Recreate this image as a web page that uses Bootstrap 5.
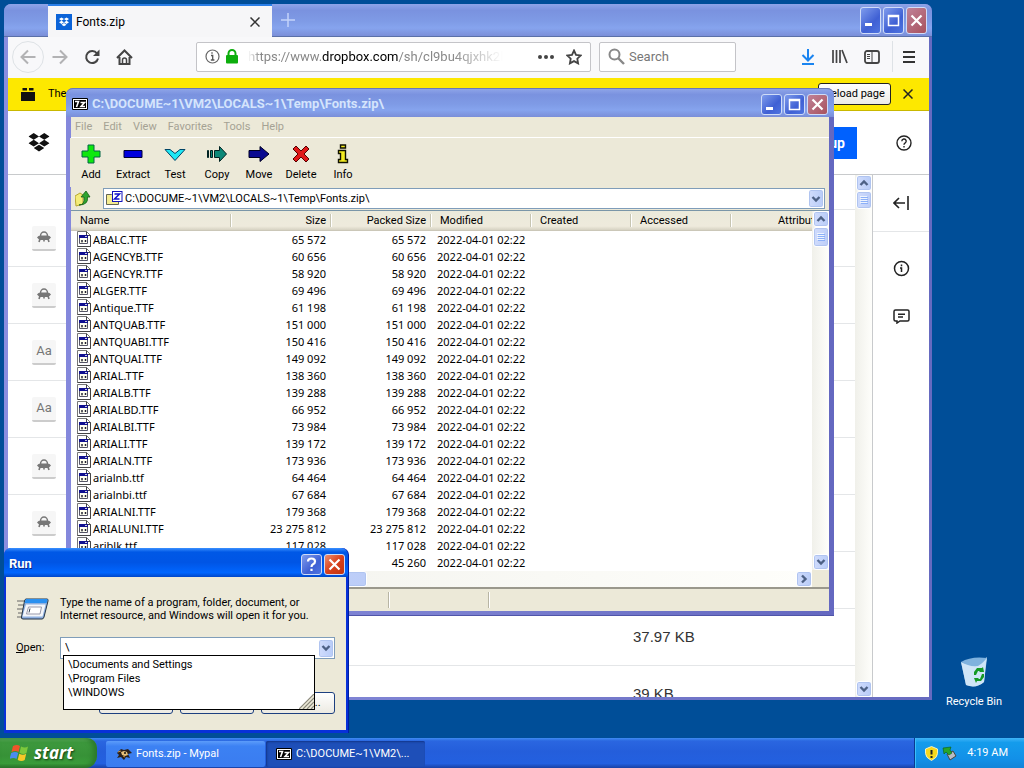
<!DOCTYPE html>
<html lang="en">
<head>
<meta charset="utf-8">
<meta name="viewport" content="width=device-width, initial-scale=1">
<title>Desktop</title>
<link rel="stylesheet" href="https://cdn.jsdelivr.net/npm/bootstrap@5.3.0/dist/css/bootstrap.min.css">
<style>
:root{--face:#ece9d8;--frame:#7b80d0;--deep:#5055a8}
html,body{height:100%}
body{font-family:Roboto,"Noto Sans",sans-serif;font-size:11px;line-height:14px;color:#000;background:#004e98;overflow:hidden}
button,input{font:inherit;color:inherit}
button{border:0;background:none;padding:0;display:inline-flex;align-items:center;justify-content:center}
svg{display:block;flex:none}
.desk{min-height:0}
.win{position:absolute;display:flex;flex-direction:column}
.lunatitle{background:linear-gradient(#8ea4e8,#7a92df 20%,#7f9be6 55%,#86a4ee 75%,#7a8ed8)}
.ctls{display:flex;align-items:center;gap:2px}
.ctl{width:21px;height:21px;border:1px solid #cfdcf8;border-radius:3px;background:linear-gradient(135deg,#7f9cec,#3f60d4 60%,#4f74e0);flex:none}
.ctl.tall{height:27px}
.ctl.x-soft{background:linear-gradient(135deg,#c08298,#a8525e)}
.ctl.x-hot{background:linear-gradient(135deg,#ee9070,#d8401c 50%,#c03410)}
.arrowbtn{width:16px;height:16px;border:1px solid #fff;border-radius:3px;background:linear-gradient(90deg,#d0dcfc,#b8ccf8);box-shadow:inset 0 0 0 1px #b0c4f0;flex:none}
.combo .arrowbtn{height:19px}
.thumb{border:1px solid #fff;border-radius:3px;background:linear-gradient(90deg,#d0dcfc,#bccdf8);box-shadow:inset 0 0 0 1px #b0c4f0;display:flex;align-items:center;justify-content:center;flex:none}
.vtrack{width:17px;background:linear-gradient(90deg,#f0f0ea,#fefefb);display:flex;flex-direction:column;align-items:center;flex:none}

/* browser */
.browser{left:4px;right:92px;top:4px;bottom:38px;padding:0 3px 3px 4px;background:linear-gradient(90deg,#8a8ee0,var(--frame) 50%,#666ac0);border-radius:7px 7px 0 0}
.tabstrip,.navrow,.notice,.pagehead,.ziptitle,.menurow,.toolrow,.addrrow,.statusrow,.runtitle{flex:none}
.tabstrip{height:33px;border-bottom:1px solid #5a70a8;margin:0 -3px 0 -4px;padding:0 5px 0 4px;border-radius:7px 7px 0 0}
.tabitem{width:224px;height:33px;background:#f6f6f8;border-top:2px solid #2a7fe8;margin-left:40px;font-size:12px}
.navrow{height:41px;background:#f8f8fa;padding-bottom:2px}
.tool{width:32px;height:32px;flex:none}
.field{height:30px;background:#fff;border:1px solid #c4c4c8;border-radius:2px;font-size:13px;color:#777}
.urltext{color:#888;white-space:nowrap;-webkit-mask-image:linear-gradient(90deg,transparent,#000 12px,#000 80%,transparent)}
.searchbox{width:137px}
.notice{height:33px;background:#fde800;border-bottom:1px solid #c9b800}
.reload{border:1px solid #222;border-radius:3px;background:linear-gradient(#fff,#ecebe4);height:22px;width:73px}
.pagehead{height:64px;border-bottom:1px solid #c8cacc;background:#fff}
.brandmark{margin-left:20px}
.signup{background:#0061fe;color:#fff;font-weight:700;font-size:14px;width:80px;height:32px;justify-content:flex-end;padding-right:12px}
.helpbtn{width:46px;margin:0 2px 0 24px}
.filerow{height:57px;border-bottom:1px solid #e4e6e8;flex:none}
.filerow.short{height:35px}
.filethumb{width:24px;height:25px;margin-left:24px;background:#f6f6f6;border-bottom:2px solid #ccc;border-radius:2px;color:#777;font-size:13px}
.filesize{font:15px/20px "Liberation Sans",sans-serif;color:#333;width:222px}
.siderail{width:57px;border-left:1px solid #c8cacc;background:#fff}
.siderail .tool{margin-top:20px}
.siderail .tool+.tool{margin-top:16px}

/* archive manager */
.zipwin{left:66px;right:190px;top:88px;bottom:122px;padding:0 5px 4px;background:linear-gradient(90deg,#8488dc,var(--frame) 50%,#6468c0);border-radius:7px 7px 0 0;border-bottom:1px solid var(--deep)}
.ziptitle{height:29px;margin:0 -5px;padding:2px 6px 0 6px;border-top:1px solid #6878b8;border-radius:7px 7px 0 0}
.wtitle{font:bold 13px/18px Roboto,"Open Sans",sans-serif}
.ziptitle .wtitle{color:#d4e4fc}
.menurow{height:21px;background:var(--face);border-bottom:1px solid #fff;color:#a5a294;gap:11px}
.toolrow{height:49px;background:var(--face)}
.toolrow button{flex-direction:column;height:49px;padding-top:1px;width:42px;gap:4px;flex:none}
.toolrow{margin-left:-1px}
.addrrow{height:24px;background:var(--face);border-bottom:1px solid #7a96a8}
.combo{border:1px solid #7f9db9;background:#fff}
.combo input{border:0;outline:0;background:none;min-width:0}
.zipicon{margin:0 2px}
.listtable{table-layout:fixed;border-collapse:collapse;width:760px}
.listtable th{height:19px;font-weight:400;line-height:16px;background:linear-gradient(#ebeadb,#eeeadc 80%,#d6d2c2);border-bottom:1px solid #cbc7b8;position:relative;padding:2px 5px 0 9px;white-space:nowrap}
.listtable th+th::before{content:"";position:absolute;left:-1px;top:3px;height:13px;border-left:1px solid #c7c5b2;border-right:1px solid #fff}
.listtable td{height:17px;line-height:17px;padding:0 5px 0 6px;white-space:nowrap;font-family:"Noto Sans",sans-serif}
.listtable .num{text-align:right}
.fname{display:flex;gap:2px;align-items:center}
.corner{height:17px;background:var(--face)}
.statusrow{height:24px;background:var(--face);border-top:2px solid #9a988c}
.statusrow span{border-right:1px solid #b8b5a4;box-shadow:1px 0 #fff;margin:3px 0}

/* run dialog */
.rundlg{left:4px;bottom:5px;width:345px;height:185px;padding:0 2px 3px;background:#0831d9;border-radius:7px 7px 0 0;border-right:1px solid #001ea0}
.runtitle{height:29px;margin:0 -2px;padding:3px 3px 0 5px;color:#fff;text-shadow:1px 1px #0a2a90;border-radius:7px 7px 0 0;background:linear-gradient(#3a90ff,#0058e6 14%,#0055e5 50%,#0066ff 85%,#0046c8)}
.runbody{background:var(--face)}
.runmsg{padding:19px 10px 0 11px;gap:11px}
.runmsg p{line-height:13px}
.runopen{padding:0 11px 0 10px;margin-top:15px}
.runopen label{width:44px}
.runopen .combo{height:22px}
.runbtns{padding:0 11px 16px;gap:7px;margin-top:auto}
.suggest{position:absolute;left:59px;top:107px;width:252px;height:55px;background:#fff;border:1px solid #000;padding:2px 4px;z-index:2}
.suggest li{height:14px}
.grip{position:absolute;right:0;bottom:0}
.xpbtn{width:74px;height:22px;border:1px solid #1d4080;border-radius:3px;background:linear-gradient(#fff,#eceae2)}

.bin{position:absolute;right:12px;bottom:29px;width:76px;color:#fff;text-decoration:none;text-align:center;gap:7px}

/* taskbar */
.taskbar{height:30px;background:linear-gradient(#3f8cf3,#2a66e0 10%,#245edb 45%,#2360e0 85%,#1941a5);color:#fff;flex:none}
.startbtn{width:97px;height:30px;border-radius:0 10px 12px 0;background:linear-gradient(#5cac5c,#3d983d 15%,#379237 60%,#3a9c3a 85%,#2a702a);box-shadow:inset -4px 0 5px #2c7a2c;font:italic bold 17px/22px "Open Sans",sans-serif;text-shadow:1px 1px 2px #123c12;padding-right:14px}
.tasks{gap:1px;margin-left:9px;padding-top:2px}
.task{height:26px;width:159px;border-radius:2px;background:linear-gradient(#5c9cfa,#3c81f3 20%,#3a7cf0);justify-content:flex-start;padding-left:10px}
.task.active-task{background:#1e4fb8;box-shadow:inset 1px 1px 2px #12358a}
.tray{width:110px;background:linear-gradient(#40b4f8,#149cec 15%,#1290e8 70%,#1284d8);border-left:1px solid #0a3a90;box-shadow:inset 1px 0 #3cc0fa;padding-left:10px}
</style>
</head>
<body class="d-flex flex-column">
<svg width="0" height="0" class="position-absolute" aria-hidden="true">
<defs>
<symbol id="fon" viewBox="0 0 14 16"><path d="M.5.5h9l4 4v11H.5z" fill="#fff" stroke="#777"/><path d="M9.500.5v4h4v11H.5" fill="none" stroke="#444"/><path d="M2.500 5.500h8v7h-8z" fill="#fffff0" stroke="#556"/><path d="M2 4h9v3H2z" fill="#101090"/><path d="M8 5.500h2" stroke="#ccd"/><path d="M4 10h2M5 9v2.500M7.500 10h2M8.500 9v2" stroke="#223"/></symbol>
<symbol id="cdn" viewBox="0 0 10 10"><path d="M1.500 3 5 6.500 8.500 3" fill="none" stroke="#4d6185" stroke-width="2.400"/></symbol>
<symbol id="cup" viewBox="0 0 10 10"><path d="M1.500 7 5 3.500 8.500 7" fill="none" stroke="#4d6185" stroke-width="2.400"/></symbol>
<symbol id="crt" viewBox="0 0 10 10"><path d="M3 1.500 6.500 5 3 8.500" fill="none" stroke="#4d6185" stroke-width="2.400"/></symbol>
<symbol id="mn" viewBox="0 0 13 13"><path d="M1 10.500h7" stroke="#fff" stroke-width="3"/></symbol>
<symbol id="mx" viewBox="0 0 13 13"><path d="M1.500 1.500h10v10h-10zM1 2.500h11" fill="none" stroke="#fff" stroke-width="1.500"/></symbol>
<symbol id="xx" viewBox="0 0 13 13"><path d="m1.500 1.500 10 10m0-10-10 10" stroke="#fff" stroke-width="2.200"/></symbol>
<symbol id="grp" viewBox="0 0 8 8"><path d="M0 .5h7M0 2.500h7M0 4.500h7M0 6.500h7" stroke="#eef4fe"/><path d="M1 1.500h7M1 3.500h7M1 5.500h7M1 7.500h7" stroke="#8cb0f8"/></symbol>
<symbol id="dbx" viewBox="0 0 20 18"><path d="M5 0 10 3.200 5 6.400 0 3.200zM15 0l5 3.200-5 3.200-5-3.200zM0 9.600 5 6.400l5 3.200-5 3.200zM15 6.400l5 3.200-5 3.200-5-3.200zM5 14.300l5-3.200 5 3.200-5 3.200z" fill="currentColor"/></symbol>
<symbol id="ufo" viewBox="0 0 14 12"><path d="M3.500 5a3.500 4 0 0 1 7 0" fill="none" stroke="#777" stroke-width="1.500"/><path d="M0 6.500Q1 4.500 4 4.500h6q3 0 4 2L11.500 9h-9z" fill="#777"/><path d="M3 8 2 11M7 8v2.500M11 8l1 3" stroke="#777" stroke-width="1.600"/></symbol>
<symbol id="sz" viewBox="0 0 16 12"><path d="M.5.5h15v11H.5z" fill="#fff" stroke="#000"/><path d="M2 2h12v8H2z" fill="#000"/><path d="M3 3.500h3.500L4.500 9M8.500 4.500h4l-3.500 4h4" fill="none" stroke="#fff" stroke-width="1.600"/></symbol>
</defs>
</svg>

<main class="desk position-relative flex-grow-1">

<section class="win browser" aria-label="Web browser">
  <div class="tabstrip lunatitle d-flex">
    <div class="tabitem d-flex align-items-center ps-2 pe-2">
      <svg width="16" height="16" viewBox="0 0 16 16" class="me-1" color="#fff"><rect width="16" height="16" fill="#0b63d8"/><use href="#dbx" x="3" y="3" width="10" height="10"/></svg>
      <span class="flex-grow-1">Fonts.zip</span>
      <button aria-label="Close tab" class="me-1"><svg width="10" height="10" viewBox="0 0 10 10"><path d="m.5.5 9 9m0-9-9 9" stroke="#333" stroke-width="1.500"/></svg></button>
    </div>
    <button aria-label="New tab" class="ms-2"><svg width="16" height="16" viewBox="0 0 16 16"><path d="M8 1v14M1 8h14" stroke="#c4d4fa" stroke-width="1.500"/></svg></button>
    <div class="ms-auto ctls">
      <button class="ctl tall" aria-label="Minimize"><svg width="13" height="13"><use href="#mn"/></svg></button>
      <button class="ctl tall" aria-label="Maximize"><svg width="13" height="13"><use href="#mx"/></svg></button>
      <button class="ctl tall x-soft" aria-label="Close"><svg width="13" height="13"><use href="#xx"/></svg></button>
    </div>
  </div>
  <nav class="navrow d-flex align-items-center ps-1">
    <button class="tool rounded-circle border" aria-label="Back"><svg width="16" height="16" viewBox="0 0 16 16"><path d="M15.500 8H1.500M8 1.500 1.500 8 8 14.500" fill="none" stroke="#b2b2b4" stroke-width="2"/></svg></button>
    <button class="tool" aria-label="Forward"><svg width="16" height="16" viewBox="0 0 16 16"><path d="M.5 8h14M8 1.500 14.500 8 8 14.500" fill="none" stroke="#b2b2b4" stroke-width="2"/></svg></button>
    <button class="tool" aria-label="Reload"><svg width="16" height="16" viewBox="0 0 16 16"><path d="M13 4.500A6 6 0 1 0 14 9.500" fill="none" stroke="#444" stroke-width="2"/><path d="M15.500.5v6.500H9z" fill="#444"/></svg></button>
    <button class="tool" aria-label="Home"><svg width="17" height="16" viewBox="0 0 17 16"><path d="M1 9 8.500 1.500 16 9M3.500 8v7h10V8" fill="none" stroke="#444" stroke-width="2"/><path d="M6.500 15v-4q0-2 2-2t2 2v4" fill="none" stroke="#444" stroke-width="1.500"/></svg></button>
    <div class="tool"></div><div class="ms-4"></div>
    <div class="field flex-grow-1 d-flex align-items-center ps-2 pe-1">
      <svg width="15" height="15" viewBox="0 0 15 15" class="me-1"><circle cx="7.500" cy="7.500" r="6.500" fill="none" stroke="#666" stroke-width="1.200"/><path d="M6 6.500h1.700V11M5.800 11h3.600M7 3.200v1.600" stroke="#555" stroke-width="1.300" fill="none"/></svg>
      <svg width="16" height="15" viewBox="0 0 16 15" class="me-2"><path d="M4.500 7V4.500a3.500 3.500 0 0 1 7 0V7" fill="none" stroke="#0dae0d" stroke-width="2"/><rect x="2" y="6" width="12" height="8.500" rx="1" fill="#0dae0d"/></svg>
      <div class="urltext" role="textbox" aria-label="Address">https://www.<span class="text-black">dropbox.com</span>/sh/cl9bu4qjxhk2l</div>
      <button class="ms-auto tool" aria-label="Page actions"><svg width="16" height="6" viewBox="0 0 16 6"><g fill="#444"><circle cx="2" cy="3" r="2"/><circle cx="8" cy="3" r="2"/><circle cx="14" cy="3" r="2"/></g></svg></button>
      <button aria-label="Bookmark" class="px-1"><svg width="16" height="16" viewBox="0 0 16 16"><path d="m8 1.500 2 4.300 4.700.6-3.400 3.300.8 4.700L8 12.100l-4.100 2.300.8-4.700L1.300 6.400 6 5.800z" fill="none" stroke="#444" stroke-width="1.800"/></svg></button>
    </div>
    <label class="field d-flex align-items-center ps-2 ms-2 searchbox">
      <svg width="17" height="17" viewBox="0 0 17 17" class="me-1"><circle cx="6.500" cy="6.500" r="5" fill="none" stroke="#888" stroke-width="2"/><path d="m10 10 6 6" stroke="#888" stroke-width="2.400"/></svg>
      <input type="text" aria-label="Search" value="Search" class="border-0 bg-transparent p-0" size="10">
    </label>
    <div class="tool"></div><div class="ms-4"></div>
    <button class="tool" aria-label="Downloads"><svg width="14" height="16" viewBox="0 0 14 16"><path d="M7 0v11M1.500 6 7 11.500 12.500 6M1 15h12" fill="none" stroke="#1a84f0" stroke-width="2"/></svg></button>
    <button class="tool" aria-label="Library"><svg width="16" height="15" viewBox="0 0 16 15"><path d="M1 1v13M4.500 1v13M8 1v13M10 1l5 13" stroke="#444" stroke-width="1.700"/></svg></button>
    <button class="tool" aria-label="Sidebars"><svg width="16" height="14" viewBox="0 0 16 14"><rect x="1" y="1" width="14" height="12" rx="2" fill="none" stroke="#444" stroke-width="1.800"/><path d="M8 1v12M3 4.500h3M3 6.500h3M3 8.500h3" stroke="#444"/></svg></button>
    <div class="border-start ms-1 align-self-stretch my-1"></div>
    <button class="tool me-1" aria-label="Menu"><svg width="12" height="12" viewBox="0 0 12 12"><path d="M0 1h12M0 6h12M0 11h12" stroke="#333" stroke-width="1.800"/></svg></button>
  </nav>
  <div class="notice d-flex align-items-center ps-1">
    <svg width="16" height="15" viewBox="0 0 16 15" class="mx-2"><path d="M1 5h14v9H1zM2.500 1H7v2.500H2.500zM9 1h4.500v2.500H9z" fill="#111"/></svg>
    <span class="ms-1">The</span>
    <button class="reload ms-auto">Reload page</button>
    <button class="px-2 me-2 ms-1" aria-label="Dismiss"><svg width="10" height="10" viewBox="0 0 10 10"><path d="m.5.500 9 9m0-9-9 9" stroke="#222" stroke-width="1.500"/></svg></button>
  </div>
  <header class="pagehead d-flex align-items-center">
    <svg width="22" height="19" viewBox="0 0 20 18" color="#111" class="brandmark"><use href="#dbx"/></svg>
    <button class="signup ms-auto">Sign up</button>
    <button class="helpbtn" aria-label="Help"><svg width="16" height="16" viewBox="0 0 16 16"><circle cx="8" cy="8" r="7" fill="none" stroke="#222" stroke-width="1.400"/><path d="M5.800 6.200a2.200 2.200 0 1 1 3.200 2q-1 .6-1 1.600M8 11v1.500" fill="none" stroke="#222" stroke-width="1.400"/></svg></button>
  </header>
  <div class="d-flex flex-grow-1 overflow-hidden bg-white">
    <div class="flex-grow-1 overflow-hidden d-flex flex-column">
      <div class="filerow short"></div>
      <div class="filerow d-flex align-items-center"><div class="filethumb d-flex align-items-center justify-content-center"><svg width="14" height="12"><use href="#ufo"/></svg></div></div>
      <div class="filerow d-flex align-items-center"><div class="filethumb d-flex align-items-center justify-content-center"><svg width="14" height="12"><use href="#ufo"/></svg></div></div>
      <div class="filerow d-flex align-items-center"><div class="filethumb d-flex align-items-center justify-content-center">Aa</div></div>
      <div class="filerow d-flex align-items-center"><div class="filethumb d-flex align-items-center justify-content-center">Aa</div></div>
      <div class="filerow d-flex align-items-center"><div class="filethumb d-flex align-items-center justify-content-center"><svg width="14" height="12"><use href="#ufo"/></svg></div></div>
      <div class="filerow d-flex align-items-center"><div class="filethumb d-flex align-items-center justify-content-center"><svg width="14" height="12"><use href="#ufo"/></svg></div></div>
      <div class="filerow"></div>
      <div class="filerow d-flex align-items-center"><div class="filesize ms-auto">37.97 KB</div></div>
      <div class="filerow d-flex align-items-center"><div class="filesize ms-auto">39 KB</div></div>
    </div>
    <div class="vtrack">
      <button class="arrowbtn" aria-label="Scroll up"><svg width="10" height="10"><use href="#cup"/></svg></button>
      <div class="thumb" style="width:16px;height:18px"><svg width="8" height="8"><use href="#grp"/></svg></div>
      <button class="arrowbtn mt-auto" aria-label="Scroll down"><svg width="10" height="10"><use href="#cdn"/></svg></button>
    </div>
    <aside class="siderail d-flex flex-column align-items-center">
      <div class="filerow w-100 d-flex align-items-center justify-content-center"><button aria-label="Expand"><svg width="16" height="16" viewBox="0 0 16 16"><path d="M1 8h11M6 3 1 8l5 5M15 1v14" fill="none" stroke="#222" stroke-width="1.600"/></svg></button></div>
      <button class="tool" aria-label="Info"><svg width="17" height="17" viewBox="0 0 17 17"><circle cx="8.500" cy="8.500" r="7" fill="none" stroke="#222" stroke-width="1.500"/><path d="M8.500 4.500v1.700M7 8h1.500v4" fill="none" stroke="#222" stroke-width="1.500"/></svg></button>
      <button class="tool" aria-label="Comments"><svg width="17" height="15" viewBox="0 0 17 15"><path d="M2.500 1h12q1.500 0 1.500 1.500v8q0 1.500-1.500 1.500H7l-3 2v-2H2.500Q1 12 1 10.500v-8Q1 1 2.500 1zM5 5.200h7M5 8h5" fill="none" stroke="#222" stroke-width="1.500"/></svg></button>
    </aside>
  </div>
</section>

<section class="win zipwin" aria-label="Archive manager">
  <div class="ziptitle lunatitle d-flex align-items-center">
    <svg width="16" height="12" class="me-1"><use href="#sz"/></svg>
    <span class="wtitle flex-grow-1 text-nowrap">C:\DOCUME~1\VM2\LOCALS~1\Temp\Fonts.zip\</span>
    <div class="ctls">
      <button class="ctl" aria-label="Minimize"><svg width="13" height="13"><use href="#mn"/></svg></button>
      <button class="ctl" aria-label="Maximize"><svg width="13" height="13"><use href="#mx"/></svg></button>
      <button class="ctl x-soft" aria-label="Close"><svg width="13" height="13"><use href="#xx"/></svg></button>
    </div>
  </div>
  <div class="menurow d-flex align-items-center ps-1"><button>File</button><button>Edit</button><button>View</button><button>Favorites</button><button>Tools</button><button>Help</button></div>
  <div class="toolrow d-flex">
    <button><svg width="20" height="20" viewBox="0 0 20 20"><path d="M7 1h6v6h6v6h-6v6H7v-6H1V7h6z" fill="#0ee80e" stroke="#064"/></svg>Add</button>
    <button><svg width="20" height="20" viewBox="0 0 20 20"><path d="M1 6.500h18v7H1z" fill="#00d" stroke="#003"/></svg>Extract</button>
    <button><svg width="22" height="20" viewBox="0 0 22 20"><path d="M1 5.500h5l5 4 5-4h5L11 16.500z" fill="#1fe8f4" stroke="#046"/></svg>Test</button>
    <button><svg width="22" height="20" viewBox="0 0 22 20"><path d="M1.500 6.500h1v7h-1zM4.500 6.500h2v7h-2zM8.500 6.500h5V2.500l7 7.500-7 7.500v-4h-5z" fill="#0c8878" stroke="#022"/></svg>Copy</button>
    <button><svg width="22" height="20" viewBox="0 0 22 20"><path d="M1 6.500h11V2.500l9 7.500-9 7.500v-4H1z" fill="#0a0a90" stroke="#002"/></svg>Move</button>
    <button><svg width="20" height="20" viewBox="0 0 20 20"><path d="M2 5l3-3 5 5 5-5 3 3-5 5 5 5-3 3-5-5-5 5-3-3 5-5z" fill="#e01818" stroke="#500"/></svg>Delete</button>
    <button><svg width="14" height="20" viewBox="0 0 14 20"><path d="M4.500 1h5v3h-5zM2.500 6.500h7v9h2v3h-9v-3h2v-6h-2z" fill="#f4ec20" stroke="#110" stroke-width="1.400"/></svg>Info</button>
  </div>
  <div class="addrrow d-flex align-items-center">
    <button class="ps-1 pe-2 me-1" aria-label="Up one level"><svg width="16" height="17" viewBox="0 0 16 17"><path d="M0 6l5-3 3 2v9l-7 2z" fill="#f4ec78" stroke="#b8a830"/><path d="M4 15q6 0 5-8H6l5-6 4 6h-2.500q1 8-8.500 8z" fill="#2fa52f" stroke="#166016" stroke-width=".8"/></svg></button>
    <div class="combo flex-grow-1 d-flex align-items-center">
      <svg width="17" height="15" viewBox="0 0 17 15" class="zipicon"><path d="M.5 3.500h5l1 1h6v9H.5z" fill="#f4ec90" stroke="#665"/><rect x="6.500" y=".5" width="9.500" height="10" fill="#fff" stroke="#11b"/><path d="M8.500 3h5l-5 5h5" fill="none" stroke="#11c" stroke-width="1.500"/></svg>
      <input type="text" aria-label="Path" class="flex-grow-1 p-0" value="C:\DOCUME~1\VM2\LOCALS~1\Temp\Fonts.zip\">
      <button class="arrowbtn" aria-label="Show paths"><svg width="10" height="10"><use href="#cdn"/></svg></button>
    </div>
    <div class="ps-1"></div>
  </div>
  <div class="d-flex flex-grow-1 overflow-hidden bg-white">
    <div class="d-flex flex-column flex-grow-1 overflow-hidden">
      <div class="flex-grow-1 overflow-hidden">
      <table class="listtable">
        <colgroup><col style="width:160px"><col style="width:100px"><col style="width:100px"><col style="width:100px"><col style="width:100px"><col style="width:100px"><col style="width:100px"></colgroup>
        <thead><tr><th>Name</th><th class="num">Size</th><th class="num">Packed Size</th><th>Modified</th><th>Created</th><th>Accessed</th><th class="num">Attributes</th></tr></thead>
        <tbody>
        <tr><td><div class="fname"><svg width="14" height="16"><use href="#fon"/></svg>ABALC.TTF</div></td><td class="num">65 572</td><td class="num">65 572</td><td>2022-04-01 02:22</td></tr>
        <tr><td><div class="fname"><svg width="14" height="16"><use href="#fon"/></svg>AGENCYB.TTF</div></td><td class="num">60 656</td><td class="num">60 656</td><td>2022-04-01 02:22</td></tr>
        <tr><td><div class="fname"><svg width="14" height="16"><use href="#fon"/></svg>AGENCYR.TTF</div></td><td class="num">58 920</td><td class="num">58 920</td><td>2022-04-01 02:22</td></tr>
        <tr><td><div class="fname"><svg width="14" height="16"><use href="#fon"/></svg>ALGER.TTF</div></td><td class="num">69 496</td><td class="num">69 496</td><td>2022-04-01 02:22</td></tr>
        <tr><td><div class="fname"><svg width="14" height="16"><use href="#fon"/></svg>Antique.TTF</div></td><td class="num">61 198</td><td class="num">61 198</td><td>2022-04-01 02:22</td></tr>
        <tr><td><div class="fname"><svg width="14" height="16"><use href="#fon"/></svg>ANTQUAB.TTF</div></td><td class="num">151 000</td><td class="num">151 000</td><td>2022-04-01 02:22</td></tr>
        <tr><td><div class="fname"><svg width="14" height="16"><use href="#fon"/></svg>ANTQUABI.TTF</div></td><td class="num">150 416</td><td class="num">150 416</td><td>2022-04-01 02:22</td></tr>
        <tr><td><div class="fname"><svg width="14" height="16"><use href="#fon"/></svg>ANTQUAI.TTF</div></td><td class="num">149 092</td><td class="num">149 092</td><td>2022-04-01 02:22</td></tr>
        <tr><td><div class="fname"><svg width="14" height="16"><use href="#fon"/></svg>ARIAL.TTF</div></td><td class="num">138 360</td><td class="num">138 360</td><td>2022-04-01 02:22</td></tr>
        <tr><td><div class="fname"><svg width="14" height="16"><use href="#fon"/></svg>ARIALB.TTF</div></td><td class="num">139 288</td><td class="num">139 288</td><td>2022-04-01 02:22</td></tr>
        <tr><td><div class="fname"><svg width="14" height="16"><use href="#fon"/></svg>ARIALBD.TTF</div></td><td class="num">66 952</td><td class="num">66 952</td><td>2022-04-01 02:22</td></tr>
        <tr><td><div class="fname"><svg width="14" height="16"><use href="#fon"/></svg>ARIALBI.TTF</div></td><td class="num">73 984</td><td class="num">73 984</td><td>2022-04-01 02:22</td></tr>
        <tr><td><div class="fname"><svg width="14" height="16"><use href="#fon"/></svg>ARIALI.TTF</div></td><td class="num">139 172</td><td class="num">139 172</td><td>2022-04-01 02:22</td></tr>
        <tr><td><div class="fname"><svg width="14" height="16"><use href="#fon"/></svg>ARIALN.TTF</div></td><td class="num">173 936</td><td class="num">173 936</td><td>2022-04-01 02:22</td></tr>
        <tr><td><div class="fname"><svg width="14" height="16"><use href="#fon"/></svg>arialnb.ttf</div></td><td class="num">64 464</td><td class="num">64 464</td><td>2022-04-01 02:22</td></tr>
        <tr><td><div class="fname"><svg width="14" height="16"><use href="#fon"/></svg>arialnbi.ttf</div></td><td class="num">67 684</td><td class="num">67 684</td><td>2022-04-01 02:22</td></tr>
        <tr><td><div class="fname"><svg width="14" height="16"><use href="#fon"/></svg>ARIALNI.TTF</div></td><td class="num">179 368</td><td class="num">179 368</td><td>2022-04-01 02:22</td></tr>
        <tr><td><div class="fname"><svg width="14" height="16"><use href="#fon"/></svg>ARIALUNI.TTF</div></td><td class="num">23 275 812</td><td class="num">23 275 812</td><td>2022-04-01 02:22</td></tr>
        <tr><td><div class="fname"><svg width="14" height="16"><use href="#fon"/></svg>ariblk.ttf</div></td><td class="num">117 028</td><td class="num">117 028</td><td>2022-04-01 02:22</td></tr>
        <tr><td></td><td></td><td class="num">45 260</td><td>2022-04-01 02:22</td></tr>
        </tbody>
      </table>
      </div>
      <div class="vtrack w-100 flex-row"><div class="thumb" style="width:40%;height:16px"></div><button class="arrowbtn ms-auto" aria-label="Scroll right"><svg width="10" height="10"><use href="#crt"/></svg></button></div>
    </div>
    <div class="d-flex flex-column">
    <div class="vtrack flex-grow-1">
      <button class="arrowbtn" aria-label="Scroll up"><svg width="10" height="10"><use href="#cup"/></svg></button>
      <div class="thumb" style="width:16px;height:20px"><svg width="8" height="8"><use href="#grp"/></svg></div>
      <button class="arrowbtn mt-auto" aria-label="Scroll down"><svg width="10" height="10"><use href="#cdn"/></svg></button>
    </div>
    <div class="corner"></div>
    </div>
  </div>
  <div class="statusrow d-flex"><span style="width:218px"></span><span style="width:100px"></span><span style="width:100px"></span></div>
</section>

<section class="win rundlg" aria-label="Run">
  <div class="runtitle d-flex align-items-center">
    <span class="wtitle flex-grow-1">Run</span>
    <div class="ctls">
      <button class="ctl" aria-label="Help"><svg width="13" height="15" viewBox="0 0 13 15"><path d="M3 4.500Q3 1.500 6.500 1.500T10 4.500Q10 6.500 8 7.200 6.500 8 6.500 10M6.500 11.700V14" fill="none" stroke="#fff" stroke-width="2.200"/></svg></button>
      <button class="ctl x-hot" aria-label="Close"><svg width="13" height="13"><use href="#xx"/></svg></button>
    </div>
  </div>
  <div class="runbody flex-grow-1 d-flex flex-column">
    <div class="d-flex align-items-center runmsg">
      <svg width="32" height="24" viewBox="0 0 32 24"><path d="M0 4h8M1 8h6M0 12h6M1 16h4M0 20h4" stroke="#666"/><path d="M9 2h21q1.500 0 1 2l-4 16q-.5 2-2 2H6q-2 0-1.500-2L7.500 4Q8 2 9 2z" fill="#8fb0e0" stroke="#234"/><path d="M9 2h21.500l-.8 4H7.500z" fill="#2a90f0"/><path d="M9 7.500h19.500l-3 12H5.500z" fill="#f4f6fa"/><path d="M11.500 10h13l-1.500 7H9.500z" fill="#fff" stroke="#99a"/><path d="M13 11.500l-1 4" stroke="#345"/></svg>
      <p class="m-0">Type the name of a program, folder, document, or<br>Internet resource, and Windows will open it for you.</p>
    </div>
    <div class="d-flex align-items-center runopen">
      <label for="open"><u>O</u>pen:</label>
      <div class="combo d-flex align-items-center flex-grow-1 ps-1"><input id="open" type="text" value="\" class="flex-grow-1 p-0"><button class="arrowbtn" aria-label="Show history"><svg width="10" height="10"><use href="#cdn"/></svg></button></div>
    </div>
    <div class="d-flex justify-content-end runbtns"><button class="xpbtn" aria-label="OK"></button><button class="xpbtn" aria-label="Cancel"></button><button class="xpbtn">Browse...</button></div>
  </div>
  <ul class="suggest list-unstyled m-0"><li>\Documents and Settings</li><li>\Program Files</li><li>\WINDOWS</li>
    <svg class="grip" width="15" height="15" viewBox="0 0 15 15"><path d="M15 0v15H0z" fill="#ece9d8"/><path d="M15 0 0 15M15 4 4 15M15 8 8 15M15 12l-3 3" stroke="#8a887a" stroke-width="1.200"/></svg>
  </ul>
</section>

<a href="#" class="bin d-flex flex-column align-items-center">
  <svg width="30" height="32" viewBox="0 0 30 32"><path d="M2 6q10 4 26-4L25 26q-8 7-18 3z" fill="#b4d2ee"/><path d="M2 6q12 5 16 3 5-5 10-8-2 10-2 17L25 26q-8 7-18 3z" fill="#d8ebfa" opacity=".75"/><path d="M2 6Q12 0 28 2q-4 5-9 8Q10 11 2 6z" fill="#7fb2de"/><path d="M15 19v-3l3-4h5l1-1 1 5h-5l1-1h-2l-2 4zM25 18v3l-3 4h-4l-1 2-2-5h5l-1 1h2l2-5z" fill="#159a25"/></svg>
  <span>Recycle Bin</span>
</a>
</main>

<footer class="taskbar d-flex">
  <button class="startbtn"><svg width="20" height="20" viewBox="0 0 20 20" class="me-1"><path d="M3 3q4-2 7 0L8.500 9q-3-2-7 0z" fill="#f0552a"/><path d="M11 3.500q4 2 7 0L16.500 10q-3 2-7-.3z" fill="#7cc83c"/><path d="M1.200 10q4-2 7 0L6.500 16q-3-2-7 0z" fill="#4a8cf0"/><path d="M9.200 10.700q4 2 7 0L14.700 17q-3 2-7 0z" fill="#f8c828"/></svg>start</button>
  <div class="d-flex align-items-center tasks">
    <button class="task"><svg width="16" height="14" viewBox="0 0 16 14" class="me-1"><path d="M1 6 5 2l3 1 4-1 4 4-4 1 2 4-4-1-2 3-3-3-4 1 2-3z" fill="#2c2018"/><path d="M5 5l3-1 3 1 1 3-3 1-3-1z" fill="#e8c078"/><path d="M2 5l3-1M7 9l2 1" stroke="#c89040"/><circle cx="9" cy="6" r="1" fill="#111"/></svg>Fonts.zip - Mypal</button>
    <button class="task active-task"><svg width="16" height="12" class="me-1"><use href="#sz"/></svg>C:\DOCUME~1\VM2\...</button>
  </div>
  <div class="tray ms-auto d-flex align-items-center">
    <svg width="13" height="15" viewBox="0 0 13 15" class="me-1"><path d="M6.500.5 12.500 3v4.500q0 4-6 7-6-3-6-7V3z" fill="#f8d81c" stroke="#f4f0c0"/><path d="M6.500 4v4.500M6.500 10v2" stroke="#222" stroke-width="2"/></svg>
    <svg width="15" height="15" viewBox="0 0 15 15"><path d="m5 8 6-3 3 5-6 4z" fill="#b8bcc4" stroke="#444"/><path d="M1 2l8-1-1 3 2 3-3 2-3-3-2 2z" fill="#27a52a" stroke="#0a5a14" stroke-width=".6"/></svg>
    <span class="ms-auto me-3">4:19 AM</span>
  </div>
</footer>
<script src="https://cdn.jsdelivr.net/npm/bootstrap@5.3.0/dist/js/bootstrap.bundle.min.js"></script>
</body>
</html>
